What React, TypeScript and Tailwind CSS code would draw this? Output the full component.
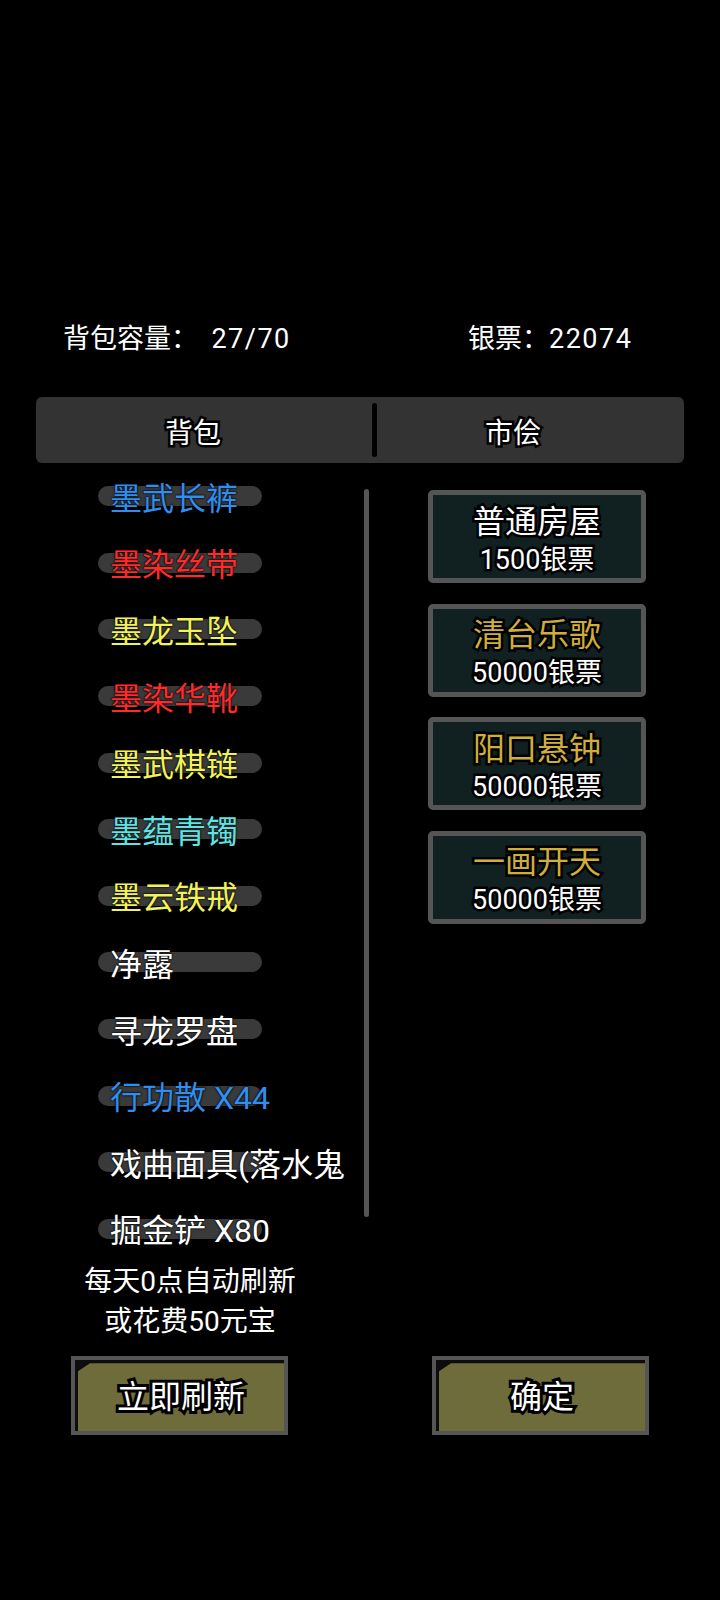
import React from "react";

const items: { name: string; color: string }[] = [
  { name: "墨武长裤", color: "text-[#2f8ef0]" },
  { name: "墨染丝带", color: "text-[#ff2a2a]" },
  { name: "墨龙玉坠", color: "text-[#f2f25a]" },
  { name: "墨染华靴", color: "text-[#ff2a2a]" },
  { name: "墨武棋链", color: "text-[#f2f25a]" },
  { name: "墨蕴青镯", color: "text-[#5fe3e3]" },
  { name: "墨云铁戒", color: "text-[#f2f25a]" },
  { name: "净露", color: "text-white" },
  { name: "寻龙罗盘", color: "text-white" },
  { name: "行功散 X44", color: "text-[#2f8ef0]" },
  { name: "戏曲面具(落水鬼", color: "text-white" },
  { name: "掘金铲 X80", color: "text-white" },
];

const shop: { title: string; price: string; gold: boolean }[] = [
  { title: "普通房屋", price: "1500银票", gold: false },
  { title: "清台乐歌", price: "50000银票", gold: true },
  { title: "阳口悬钟", price: "50000银票", gold: true },
  { title: "一画开天", price: "50000银票", gold: true },
];

function ActionButton({ label }: { label: string }) {
  return (
    <div className="w-[217px] h-[79px] border-4 border-[#555555] bg-[#0d0d0d] pl-[3px] pt-[3px]">
      <div className="w-full h-full bg-[#6f6c3c] [clip-path:polygon(12px_0,100%_0,100%_100%,0_100%,0_8px)] flex items-center justify-center">
        <span className="text-[32px] leading-none text-white [-webkit-text-stroke:6px_#000] [paint-order:stroke_fill]">
          {label}
        </span>
      </div>
    </div>
  );
}

export default function App() {
  return (
    <div className="w-[720px] h-[1600px] bg-black text-white font-['Roboto','Noto_Sans_CJK_SC',sans-serif] overflow-hidden">
      <div className="pt-[320px] h-[358px] flex items-center text-[27px] text-white">
        <div className="w-[468px] pl-[63px] whitespace-pre">
          背包容量：  <span className="tracking-[1.5px]">27/70</span>
        </div>
        <div className="whitespace-pre">
          银票：<span className="tracking-[1.5px]">22074</span>
        </div>
      </div>

      <div className="mt-[39px] ml-[36px] w-[648px] h-[66px] bg-[#333333] rounded-[6px] flex items-center">
        <div className="w-[314px] mt-[8px] text-center text-[28px] leading-none text-white [-webkit-text-stroke:5px_#000] [paint-order:stroke_fill]">
          背包
        </div>
        <div className="ml-[22px] w-[5px] h-[54px] bg-black rounded-full" />
        <div className="w-[272px] mt-[8px] text-center text-[28px] leading-none text-white [-webkit-text-stroke:5px_#000] [paint-order:stroke_fill]">
          市侩
        </div>
      </div>

      <div className="flex">
        <div className="w-[364px] flex flex-col">
          {items.map((it) => (
            <div key={it.name} className="relative h-[66.6px] flex items-center">
              <div className="absolute left-[98px] top-1/2 -translate-y-1/2 w-[164px] h-[20px] rounded-full bg-[#3a3a3a]" />
              <span
                className={`relative mt-[5px] pl-[110px] text-[32px] leading-none whitespace-nowrap ${it.color} [text-shadow:0_0_2px_#000,0_0_2px_#000]`}
              >
                {it.name}
              </span>
            </div>
          ))}
          <div className="pl-[16px] text-center text-[28px] leading-[40px] text-white">
            <div>每天0点自动刷新</div>
            <div>或花费50元宝</div>
          </div>
        </div>
        <div className="mt-[26px] w-[5px] h-[728px] bg-[#555555] rounded-full" />
        <div className="ml-[59px] pt-[27px] flex flex-col gap-[20.5px]">
          {shop.map((s) => (
            <div
              key={s.title}
              className="w-[218px] h-[93px] border-[5px] border-[#555555] rounded-[5px] bg-[#112121] flex flex-col items-center justify-center pt-[7px]"
            >
              <div
                className={`text-[32px] leading-[40px] ${s.gold ? "text-[#cfae3c]" : "text-white"} [-webkit-text-stroke:5px_#000] [paint-order:stroke_fill]`}
              >
                {s.title}
              </div>
              <div className="text-[27px] leading-[37px] text-white [-webkit-text-stroke:5px_#000] [paint-order:stroke_fill]">
                {s.price}
              </div>
            </div>
          ))}
        </div>
      </div>

      <div className="mt-[14px] flex">
        <div className="ml-[71px]">
          <ActionButton label="立即刷新" />
        </div>
        <div className="ml-[144px]">
          <ActionButton label="确定" />
        </div>
      </div>
    </div>
  );
}
